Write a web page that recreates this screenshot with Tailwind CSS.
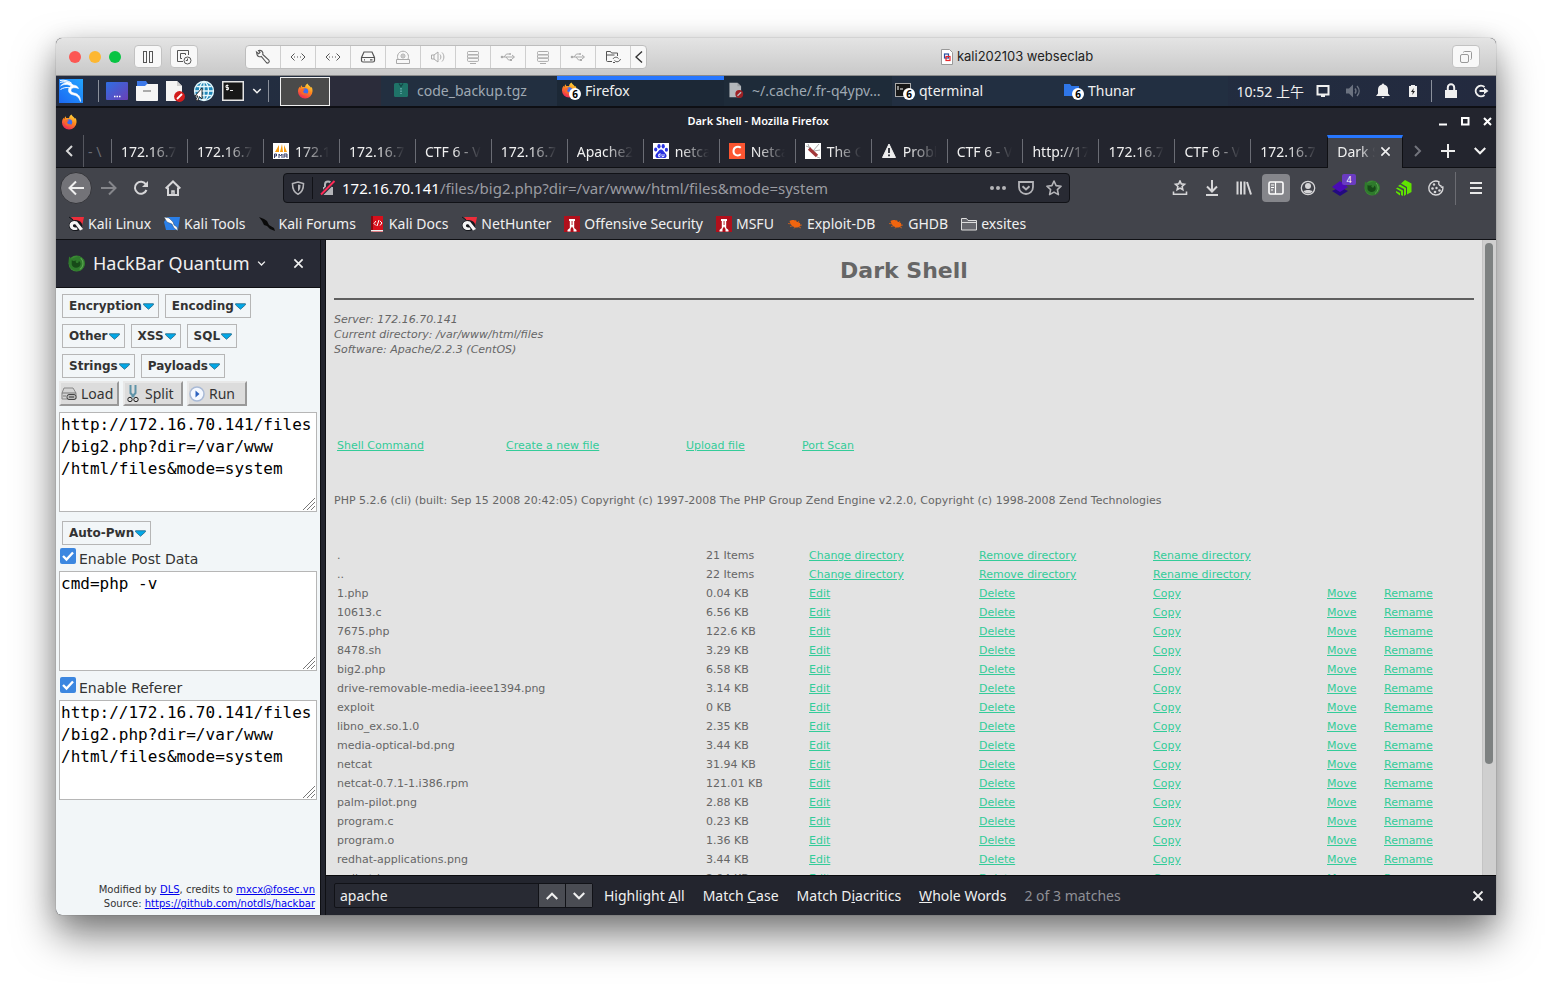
<!DOCTYPE html>
<html lang="en">
<head>
<meta charset="utf-8">
<title>Dark Shell - Mozilla Firefox</title>
<script src="https://cdn.jsdelivr.net/npm/@tailwindcss/browser@4"></script>
</head>
<body class="bg-white">
<svg class="absolute size-0" aria-hidden="true">
  <defs>
    <linearGradient id="ffg" x1="0.8" y1="0" x2="0.3" y2="1"><stop offset="0" stop-color="#ffe040"/><stop offset=".45" stop-color="#ff8a1c"/><stop offset="1" stop-color="#ee2558"/></linearGradient>
    <linearGradient id="deskg" x1="0" y1="0" x2="1" y2="1"><stop offset="0" stop-color="#2f6fe4"/><stop offset="1" stop-color="#6a3fb5"/></linearGradient>
    <linearGradient id="kalig" x1="1" y1="0" x2="0" y2="1"><stop offset="0" stop-color="#22a4ff"/><stop offset="1" stop-color="#1c68f2"/></linearGradient>
  </defs>
  <symbol id="firefox" viewBox="0 0 16 16"><path d="M8 15.500A7 7 0 0 1 1 8.400c0-2 .7-3.600 1.600-4.700l.6 1.400C3.700 3.800 4 2.800 4.700 2.300l.5 1.800c1.200-.3 2-.2 2.800.2.300-1.800 1-2.900 2.500-3.800.2 1.600 2.600 2.500 3.500 4.200l.7-.7c.5 1.200 1 2.700.8 4.600A7.200 7.200 0 0 1 8 15.500z" fill="url(#ffg)"/><circle cx="8.200" cy="8.200" r="3" fill="#3d6df0"/><path d="M4.500 6.200c1.500-.4 2.500 0 3.700.6-1.300.3-1.800 1-2 2 .5 1.500 2.300 1.900 4 1-1.500 3.200-6.200 2.200-6.500-1.300z" fill="#f9682a"/></symbol>
  <symbol id="kali" viewBox="0 0 24 24"><rect width="24" height="24" fill="url(#kalig)"/><path d="M1 3.500c5-2 10-1 13 2.500 3 .3 5 1.500 5.500 3.500-2-.8-4.500-1.200-6-.4-2.500 1.500-2 4.400 1.500 4.900 4.500.7 6.500 3.500 6.500 8.500-1.500-4-3.500-6.200-7.500-6.700-5.500-.8-6-7-1.500-8.800C9.500 5.500 5.500 4.500 1.500 7c2-2.300 4-3 6.500-3.200C6 2.800 3.500 2.800 1 3.500z" fill="#fff" stroke="#fff" stroke-width=".6"/><path d="M1.500 10.500c2.500-1.800 6-2.400 9-1.700M1 1.500c4-.7 8 0 11.500 2.500" stroke="#fff" fill="none"/></symbol>
  <symbol id="file-no" viewBox="0 0 20 22"><path d="M1 1h11l5 5v15H1z" fill="#f4f4f4"/><path d="M12 1l5 5h-5z" fill="#cfcfcf"/><circle cx="14.500" cy="16.500" r="5.400" fill="#d31c1c"/><path d="M12 19l5-5" stroke="#fff" stroke-width="1.800"/></symbol>
  <symbol id="nethunter" viewBox="0 0 16 16"><path d="M3 1h13l-1 5-2 7z" fill="#ee2d3a"/><path d="M1 1l4 3" stroke="#15171c"/><ellipse cx="7.500" cy="9.500" rx="6.700" ry="5.500" fill="#15171c"/><path d="M1.500 9C2 5.500 6 4 9 5.500L15 13l-3 1.500-4.500-6C6 8 4.800 8.700 5 10c.3 1.400 2 1.700 3.300 1.200l1.500 2C6 15.500 1.500 13 1.500 9z" fill="#f4f4f4"/></symbol>
  <symbol id="offsec" viewBox="0 0 16 16"><rect width="16" height="16" fill="#b0101c"/><path d="M5 3h6v2h-.8v7l2.300 2v1.500H9.500V13L8 10.500 6.500 13v2.500h-3V14l2.300-2V5H5z" fill="#fff"/><path d="M7.600 5h.9v4h-.9z" fill="#b0101c"/></symbol>
  <symbol id="bug" viewBox="0 0 16 16"><path d="M2.500 5c2.500-1.500 5.500-1 7.500.8l3 1.200.5 3-3 1.500C6.500 12 3.500 9 2.500 5z" fill="#f0650f"/><path d="M1 7.500l4 .5M3 10.500l4-1M7 12.500l1.500-2M9 4L8 6M12 5l-1.500 2M15 9l-4 .5M14 12l-4-2" stroke="#f0650f" stroke-width=".7"/></symbol>
  <symbol id="hackbar" viewBox="0 0 16 16"><circle cx="8" cy="8" r="7.500" fill="#3a8a34"/><path d="M.5 6L1 1.500l2.500 2L10 1l5 3c2 4 1 8-3 10.500C6 16 1 13 .5 6z" fill="#2f7a2c"/><path d="M3.500 5c1.500 1 3 .5 4.500 0-1 1-1 1.500 0 2.500 1.500.5 2.500-.5 2-2 2 1 2.500 4 .5 5.500-3 2-6.500.5-7-2z" fill="#174a18"/><path d="M12 3c3 3 3 8-1 10.500" stroke="#5ca552" fill="none"/></symbol>
  <symbol id="usb" viewBox="0 0 16 16"><path d="M1.500 8H14M12 6l2.500 2L12 10M4 8l2.500-3H9M6 8l2.500 3H10" fill="none" stroke="currentColor"/><circle cx="2" cy="8" r="1.300" fill="currentColor"/><circle cx="10" cy="5" r="1" fill="currentColor"/><path d="M10 10h2v2h-2z" fill="currentColor"/></symbol>
  <symbol id="server" viewBox="0 0 16 16"><rect x="2.500" y="2.500" width="11" height="3.300" rx="1"/><rect x="2.500" y="5.800" width="11" height="3.300" rx="1"/><rect x="2.500" y="9.100" width="11" height="3.300" rx="1"/><path d="M5 14.500h6"/></symbol>
  <symbol id="net" viewBox="0 0 16 16"><path d="M4.500 4.500L1 8l3.500 3.500M11.500 4.500L15 8l-3.500 3.500"/><path d="M4 8h9" stroke-dasharray="1 2"/></symbol>
  <symbol id="x" viewBox="0 0 12 12"><path d="M1.500 1.500l9 9M10.500 1.500l-9 9" stroke="currentColor" stroke-width="1.800" fill="none"/></symbol>
  <symbol id="down" viewBox="0 0 12 12"><path d="M1.500 3.500L6 8l4.500-4.500" stroke="currentColor" stroke-width="1.800" fill="none"/></symbol>
  <symbol id="tri" viewBox="0 0 10 6"><path d="M.5.500h9v1L5 5.500.5 1.500z" fill="#00a8e8" stroke="#2a6f8f" stroke-width=".8"/></symbol>
  <symbol id="grip" viewBox="0 0 12 12"><rect width="12" height="12" fill="#fff"/><path d="M0 12L12 0M4 12l8-8M8 12l4-4" stroke="#777" stroke-width="1" fill="none"/></symbol>
  <symbol id="check" viewBox="0 0 16 16"><path d="M3 8l3.500 3.500L13 4.500" stroke="#fff" stroke-width="2.400" fill="none"/></symbol>
</svg>

<div class="flex h-screen flex-col px-14 pt-[38px] pb-[74px]">
<div class="flex min-h-0 flex-1 flex-col overflow-hidden rounded-t-md rounded-bl-md bg-[#23252e] font-['Noto_Sans','Noto_Sans_CJK_SC',sans-serif] text-[14px] text-[#f0f0f0] shadow-[0_0_1px_rgba(0,0,0,0.6),0_20px_40px_rgba(0,0,0,0.5),0_4px_24px_rgba(0,0,0,0.12)]">

  <!-- Virtual machine window bar -->
  <header class="flex h-[38px] shrink-0 items-center border-b border-[#8b8b8b] bg-linear-to-b from-[#e4e4e4] to-[#c9c9c9] pr-4 pl-[13px] font-[Inter,sans-serif] text-[13px] text-[#222]">
    <div class="flex gap-2">
      <button aria-label="Close" class="size-3 rounded-full bg-[#fc5753]"></button>
      <button aria-label="Minimize" class="size-3 rounded-full bg-[#fdb731]"></button>
      <button aria-label="Zoom" class="size-3 rounded-full bg-[#08c443]"></button>
    </div>
    <div class="ml-[13px] flex gap-2">
      <button aria-label="Pause" class="flex h-[23px] w-7 items-center justify-center rounded-sm border border-[#c2c2c2] bg-[#f8f8f8]"><svg class="size-4" viewBox="0 0 16 16" fill="none" stroke="#555"><rect x="3.500" y="2.500" width="3" height="11"/><rect x="9.500" y="2.500" width="3" height="11"/></svg></button>
      <button aria-label="Snapshots" class="flex h-[23px] w-7 items-center justify-center rounded-sm border border-[#c2c2c2] bg-[#f8f8f8]"><svg class="size-4" viewBox="0 0 16 16" fill="none" stroke="#555"><path d="M7 12.500H1.500v-11h11V6M4.500 9.500v-5h5V6M4.500 9.500H6"/><circle cx="11.500" cy="11.500" r="3.500"/><path d="M11.500 9.500v2H9.800"/></svg></button>
    </div>
    <div class="ml-[47px] flex h-[24px] divide-x divide-[#cfcfcf] rounded-sm border border-[#bdbdbd] bg-[#f8f8f8] text-[#555]">
      <button aria-label="Settings" class="flex w-[35px] items-center justify-center"><svg class="size-4" viewBox="0 0 16 16" fill="none" stroke="currentColor" stroke-width="1.100"><path d="M2 5.500L1.500 3l2.200 1.700L5 3.500 3.500 1.500c3-.8 5 1.500 4.300 4l6 5.500c1.500 2-1 4-2.500 2.500l-5-6C4.500 8.200 2.500 7.500 2 5.500z"/></svg></button>
      <button aria-label="Network adapter" class="flex w-[35px] items-center justify-center"><svg class="size-4" fill="none" stroke="currentColor"><use href="#net"/></svg></button>
      <button aria-label="Network adapter 2" class="flex w-[35px] items-center justify-center"><svg class="size-4" fill="none" stroke="currentColor"><use href="#net"/></svg></button>
      <button aria-label="Hard disk" class="flex w-[35px] items-center justify-center"><svg class="size-4" viewBox="0 0 16 16" fill="none" stroke="currentColor" stroke-width="1.200"><path d="M1.500 8.500L4 3h8l2.500 5.500v3c0 1-.5 1.500-1.500 1.500H3c-1 0-1.500-.5-1.500-1.500zM1.500 8.500h13"/><path d="M10 10.800h2.500M4 10.800h1"/></svg></button>
      <button aria-label="CD/DVD" class="flex w-[35px] items-center justify-center text-[#aaa]"><svg class="size-4" viewBox="0 0 16 16" fill="none" stroke="currentColor"><path d="M3 10a5.500 5.500 0 1 1 10 0M1.500 10.500h13v4h-13z"/><circle cx="8" cy="7" r="2"/><circle cx="8" cy="7" r=".5"/></svg></button>
      <button aria-label="Sound card" class="flex w-[35px] items-center justify-center text-[#aaa]"><svg class="size-4" viewBox="0 0 16 16" fill="none" stroke="currentColor"><path d="M1.500 6h2.500v4H1.500zM4 6l4-3v10l-4-3M10 5.500c1.200 1.500 1.200 3.500 0 5M12 3.500c2.500 2.500 2.500 6.500 0 9"/></svg></button>
      <button aria-label="Serial port" class="flex w-[35px] items-center justify-center text-[#aaa]"><svg class="size-4" fill="none" stroke="currentColor"><use href="#server"/></svg></button>
      <button aria-label="USB device" class="flex w-[35px] items-center justify-center text-[#aaa]"><svg class="size-4"><use href="#usb"/></svg></button>
      <button aria-label="Serial port 2" class="flex w-[35px] items-center justify-center text-[#aaa]"><svg class="size-4" fill="none" stroke="currentColor"><use href="#server"/></svg></button>
      <button aria-label="USB device 2" class="flex w-[35px] items-center justify-center text-[#aaa]"><svg class="size-4"><use href="#usb"/></svg></button>
      <button aria-label="Shared folders" class="flex w-[35px] items-center justify-center"><svg class="size-4" viewBox="0 0 16 16" fill="none" stroke="currentColor"><path d="M7 12.500H2.500c-.6 0-1-.4-1-1v-9h4l1 1.500h6V7M1.500 6h8"/><path d="M8 10c1-2 4-2.500 5.500-.5M15.500 10c-1 3-4 3.500-6 1.500M8 13.500h2"/></svg></button>
      <button aria-label="Collapse toolbar" class="flex w-[15px] items-center justify-center"><svg class="h-3 w-2" viewBox="0 0 8 12" fill="none" stroke="#333" stroke-width="1.400"><path d="M7 .5L1 6l6 5.500"/></svg></button>
    </div>
    <div class="flex flex-1 items-center justify-center gap-1 pr-[65px]">
      <svg class="h-4 w-3" viewBox="0 0 12 16"><path d="M.5.500h8l3 3v12H.5z" fill="#fff" stroke="#999"/><rect x="3.500" y="5" width="4" height="4" fill="none" stroke="#2a4fa0" stroke-width="1.200"/><rect x="5" y="7.500" width="4" height="4" fill="none" stroke="#e8262a" stroke-width="1.200"/></svg>
      <span>kali202103 webseclab</span>
    </div>
    <button aria-label="Windows" class="flex h-[23px] w-7 items-center justify-center rounded-sm border border-[#c2c2c2] bg-[#f8f8f8]"><svg class="size-4" viewBox="0 0 16 16" fill="none" stroke="#999"><rect x="2.500" y="5.500" width="8" height="8" rx="1.500"/><path d="M5.500 3.500c0-.6.400-1 1-1h6c.6 0 1 .4 1 1v6c0 .6-.4 1-1 1"/></svg></button>
  </header>

  <!-- Desktop panel -->
  <nav class="flex h-8 shrink-0 items-center border-b-2 border-[#0e0f14] bg-linear-to-r from-[#242c40] via-[#203040] to-[#232a3f]">
    <button aria-label="Applications" class="ml-[3px]"><svg class="size-6"><use href="#kali"/></svg></button>
    <span class="ml-[15px] h-[22px] w-px bg-[#8a909c]"></span>
    <div class="ml-[7px] flex w-[156px] items-center justify-between">
      <button aria-label="Show desktop"><svg class="h-[18px] w-[22px]" viewBox="0 0 22 18"><rect width="22" height="18" rx="1" fill="url(#deskg)"/><path d="M8 14.500h1.500M10.500 14.500H12M13 14.500h1.500" stroke="#fff" stroke-width="1.500"/></svg></button>
      <button aria-label="Files"><svg class="h-5 w-[22px]" viewBox="0 0 22 20"><path d="M1 0h9l2 3h9v8H1z" fill="#3c78e8"/><path d="M0 5h9l2-2h11v16c0 .6-.4 1-1 1H1c-.6 0-1-.4-1-1z" fill="#f5f5f5"/><path d="M7 10h8" stroke="#aaa" stroke-width="2"/></svg></button>
      <button aria-label="Text editor"><svg class="h-[22px] w-5"><use href="#file-no"/></svg></button>
      <button aria-label="Web browser"><svg class="size-[22px]" viewBox="0 0 22 22"><circle cx="11" cy="11" r="10" fill="#1f86b8"/><g fill="none" stroke="#e8f8fc" stroke-width="1.300"><circle cx="11" cy="11" r="9.500"/><ellipse cx="11" cy="11" rx="4.500" ry="9"/><path d="M11 1v20M2 11h18M3.500 6.500h15M3.500 15.500h15"/></g><path d="M9 8v11l-2.500-2.500L4.500 21l-1.700-1L5 16H2z" fill="#fff" stroke="#222" stroke-width=".9"/></svg></button>
      <button aria-label="Terminal"><svg class="h-5 w-[22px]" viewBox="0 0 22 20"><rect x=".75" y=".75" width="20.500" height="18.500" fill="#181818" stroke="#e4e4e4" stroke-width="1.500"/><path d="M6.500 4.500H4v2h2.500v2H4M5.200 3.500v6M8 9.500h3" stroke="#fff" stroke-width=".9" fill="none"/></svg></button>
      <button aria-label="More terminals"><svg class="size-[10px]"><use href="#down"/></svg></button>
    </div>
    <span class="ml-[6px] h-[22px] w-px bg-[#8a909c]"></span>
    <button aria-label="Workspace 1" class="ml-[11px] flex h-[29px] w-[50px] items-center justify-center border border-[#eee] bg-[#4a4a4a]"><svg class="size-4"><use href="#firefox"/></svg></button>
    <button aria-label="Workspace 2" class="h-full w-[51px] bg-[#2b2c3a]"></button>
    <button class="flex h-full w-[176px] items-center gap-2 bg-[#222f40] pb-[2px] pl-3 text-[#9fa9b3]"><svg class="size-4" viewBox="0 0 16 16"><rect x="1" y="1" width="14" height="14" rx="1.500" fill="#1f7368"/><path d="M6 1.500l2 3 2-3" stroke="#144" stroke-width="1.200" fill="none"/><path d="M8 6v6" stroke="#6aa" stroke-width="1.500" stroke-dasharray="1.500 1"/></svg><span>code_backup.tgz</span></button>
    <button class="flex h-full w-[167px] items-center gap-2 border-t-4 border-[#2777ff] bg-[#1c2836] pb-[6px] pl-1"><span class="relative size-4"><svg class="size-4"><use href="#firefox"/></svg><span class="absolute top-1.5 left-2 flex size-3 items-center justify-center rounded-full bg-white text-[10px] font-bold text-black">6</span></span><span>Firefox</span></button>
    <button class="flex h-full w-[168px] items-center gap-2 bg-[#1e2b39] pb-[2px] pl-1 text-[#9fa9b3]"><svg class="size-4 opacity-70"><use href="#file-no"/></svg><span>~/.cache/.fr-q4ypv…</span></button>
    <button class="flex h-full w-[168px] items-center gap-2 bg-[#222f41] pb-[2px] pl-[3px]"><span class="relative size-4"><svg class="size-4" viewBox="0 0 16 16"><rect x=".5" y="1.500" width="15" height="13" fill="#181818" stroke="#aaa"/><path d="M3 4v4M5 7h3" stroke="#fff"/></svg><span class="absolute top-1.5 left-2 flex size-3 items-center justify-center rounded-full bg-white text-[10px] font-bold text-black">6</span></span><span>qterminal</span></button>
    <button class="flex h-full w-[168px] items-center gap-2 bg-[#222f41] pb-[2px] pl-1"><span class="relative size-4"><svg class="size-4" viewBox="0 0 16 16"><path d="M0 2h6l1.500 2H15v10H0z" fill="#2f76e8"/></svg><span class="absolute top-1.5 left-2 flex size-3 items-center justify-center rounded-full bg-white text-[10px] font-bold text-black">6</span></span><span>Thunar</span></button>
    <div class="ml-auto flex items-center">
      <time class="pr-1">10:52 上午</time>
      <button aria-label="Display" class="flex w-[30px] justify-center"><svg class="size-4" viewBox="0 0 16 16" fill="none" stroke="currentColor" stroke-width="2"><path d="M2.500 3h11v8.500h-11z"/><path d="M6 13h4"/></svg></button>
      <button aria-label="Volume" class="flex w-[30px] justify-center text-[#6b7280]"><svg class="size-4" viewBox="0 0 16 16"><path d="M1 5.500h3l4-4v13l-4-4H1z" fill="currentColor"/><path d="M10 5.500c1.200 1.500 1.200 3.500 0 5M12 3c2.800 3 2.800 7 0 10" stroke="currentColor" stroke-width="1.400" fill="none"/></svg></button>
      <button aria-label="Notifications" class="flex w-[30px] justify-center"><svg class="size-4" viewBox="0 0 16 16" fill="currentColor"><path d="M7 1.500a1 1 0 0 1 2 0c2.500.5 4 2.500 4 5v4l2 2.500H1l2-2.500v-4c0-2.500 1.500-4.500 4-5zM6.500 14h3L8 15.500z"/></svg></button>
      <button aria-label="Power" class="flex w-[30px] justify-center"><svg class="size-4" viewBox="0 0 16 16"><path d="M6 3V2h4v1h2v11H4V3z" fill="#f0f0f0"/><path d="M8.700 5L6 9h1.800L7.300 12 10 8H8.200z" fill="#222"/></svg></button>
      <span class="mx-[3px] h-[22px] w-px bg-[#8a909c]"></span>
      <button aria-label="Lock" class="flex w-[31px] justify-center"><svg class="size-4" viewBox="0 0 16 16"><path d="M2 7h12v8H2z" fill="currentColor"/><path d="M4.800 7V4.500a3.200 3.200 0 0 1 6.400 0V7" stroke="currentColor" stroke-width="2" fill="none"/></svg></button>
      <button aria-label="Log out" class="flex w-[30px] justify-center"><svg class="size-4" viewBox="0 0 16 16" fill="none" stroke="currentColor" stroke-width="2"><path d="M11.500 4A5.300 5.300 0 1 0 11.500 12"/><path d="M6.500 8h6"/><path d="M11 4.800l4.500 3.200-4.500 3.200z" fill="currentColor" stroke="none"/></svg></button>
    </div>
  </nav>

  <!-- Browser title -->
  <div class="flex h-[27px] shrink-0 items-center pl-[5px]">
    <svg class="size-4"><use href="#firefox"/></svg>
    <h2 class="flex-1 text-center text-[11px] font-semibold text-white">Dark Shell - Mozilla Firefox</h2>
    <div class="flex items-center gap-[13px] pr-1">
      <button aria-label="Minimize window"><svg class="size-[9px]" viewBox="0 0 9 9"><path d="M0 7.500h8" stroke="#fff" stroke-width="2"/></svg></button>
      <button aria-label="Maximize window"><svg class="size-[9px]" viewBox="0 0 9 9"><rect x="1" y="1" width="6.500" height="6.500" fill="none" stroke="#fff" stroke-width="2"/></svg></button>
      <button aria-label="Close window"><svg class="size-[9px]" viewBox="0 0 9 9"><path d="M1 1l7 7M8 1L1 8" stroke="#fff" stroke-width="2"/></svg></button>
    </div>
  </div>

  <!-- Tabs -->
  <div class="flex h-[33px] shrink-0 border-b border-[#0f1014]">
    <button aria-label="Scroll tabs left" class="flex w-7 items-center justify-center border-r border-[#55575f]"><svg class="h-3 w-2" viewBox="0 0 8 12" fill="none" stroke="#d8d8d8" stroke-width="2"><path d="M7 1L2 6l5 5"/></svg></button>
    <div id="tabs" role="tablist" class="flex min-w-0"></div>
    <button aria-label="Scroll tabs right" class="flex w-[30px] items-center justify-center"><svg class="h-3 w-2" viewBox="0 0 8 12" fill="none" stroke="#72747c" stroke-width="2"><path d="M1 1l5 5-5 5"/></svg></button>
    <button aria-label="New tab" class="flex w-[30px] items-center justify-center"><svg class="size-[14px]" viewBox="0 0 14 14" stroke="#eee" stroke-width="2"><path d="M7 0v14M0 7h14"/></svg></button>
    <button aria-label="List all tabs" class="flex w-[33px] items-center justify-center"><svg class="size-[14px]"><use href="#down" width="14" height="14"/></svg></button>
  </div>

  <!-- Navigation toolbar -->
  <div class="flex h-10 shrink-0 items-center bg-[#42444b] pl-1 text-[#d6d6d8]">
    <button aria-label="Back" class="mr-px flex size-8 items-center justify-center rounded-full border border-[#34353a] bg-[#737378]"><svg class="size-4" viewBox="0 0 16 16" fill="none" stroke="#eee" stroke-width="2"><path d="M16 8H1.500M8 1.500L1.500 8 8 14.500"/></svg></button>
    <button aria-label="Forward" class="flex size-8 items-center justify-center text-[#85868b]"><svg class="size-4" viewBox="0 0 16 16" fill="none" stroke="currentColor" stroke-width="2"><path d="M0 8h14.500M8 1.500L14.500 8 8 14.500"/></svg></button>
    <button aria-label="Reload" class="flex size-8 items-center justify-center"><svg class="size-4" viewBox="0 0 16 16" fill="none" stroke="currentColor" stroke-width="2"><path d="M13 4.500A6 6 0 1 0 13.500 10"/><path d="M15 1v6H9z" fill="currentColor" stroke="none"/></svg></button>
    <button aria-label="Home" class="flex size-8 items-center justify-center"><svg class="size-4" viewBox="0 0 16 16" fill="none" stroke="currentColor" stroke-width="2"><path d="M.7 8.500L8 1.500l7.300 7M3 7.500V15h10V7.500"/><path d="M7 15v-4h2v4" stroke-width="1.500"/></svg></button>
    <div class="mx-[94px] flex h-[30px] min-w-0 flex-1 items-center rounded-sm border border-[#111217] bg-[#282a33] pr-[7px] text-[#b4b4b8]">
      <button aria-label="Tracking protection" class="flex w-7 justify-center"><svg class="size-[14px]" viewBox="0 0 14 14"><path d="M7 1l5.500 1.500C12.500 8 11 11.500 7 13.200 3 11.500 1.500 8 1.500 2.500z" fill="none" stroke="currentColor" stroke-width="1.600"/><path d="M7 3.500l2.500.6C9.500 7.500 9 9 7 10.500z" fill="currentColor"/></svg></button>
      <span class="h-[22px] w-px bg-[#111217]"></span>
      <button aria-label="Connection not secure" class="flex w-[29px] justify-center"><svg class="size-4" viewBox="0 0 16 16"><path d="M3 7h10v8H3z" fill="currentColor"/><path d="M5 7V4.500a3 3 0 0 1 6 0V7" stroke="currentColor" stroke-width="2" fill="none"/><path d="M1 14.500L14.500 1" stroke="#282a33" stroke-width="4"/><path d="M1 14.500L14.500 1" stroke="#ff2a56" stroke-width="2"/></svg></button>
      <div contenteditable="true" role="textbox" aria-label="Address" class="min-w-0 flex-1 truncate text-[15px] text-[#9a9ba1]"><span class="text-white">172.16.70.141</span>/files/big2.php?dir=/var/www/html/files&amp;mode=system</div>
      <div class="flex gap-3">
        <button aria-label="Page actions"><svg class="size-4" viewBox="0 0 16 16" fill="currentColor"><circle cx="2" cy="8" r="2"/><circle cx="8" cy="8" r="2"/><circle cx="14" cy="8" r="2"/></svg></button>
        <button aria-label="Save to Pocket"><svg class="size-4" viewBox="0 0 16 16" fill="none" stroke="currentColor" stroke-width="1.800"><path d="M1 2h14v5c0 4.500-3.500 7-7 7s-7-2.500-7-7z"/><path d="M4.500 6.300L8 9.500l3.500-3.200" stroke-width="2"/></svg></button>
        <button aria-label="Bookmark this page"><svg class="size-4" viewBox="0 0 16 16" fill="none" stroke="currentColor" stroke-width="1.600" stroke-linejoin="round"><path d="M8 1l2.100 4.600 5 .6-3.700 3.400 1 5L8 12.100l-4.400 2.500 1-5L.9 6.200l5-.6z"/></svg></button>
      </div>
    </div>
    <div class="flex items-center">
      <button aria-label="Bookmarks menu" class="flex w-8 justify-center"><svg class="size-4" viewBox="0 0 16 16" fill="none" stroke="currentColor" stroke-width="1.600"><path d="M8 1l1.300 2.900 3.200.4-2.400 2.200.7 3.200L8 8.100 5.200 9.700l.7-3.200L3.500 4.300l3.200-.4zM1.500 11.500v2.700h13v-2.700"/></svg></button>
      <button aria-label="Downloads" class="flex w-8 justify-center"><svg class="size-4" viewBox="0 0 16 16" fill="none" stroke="currentColor" stroke-width="2"><path d="M8 0v11M3 6.500l5 5 5-5M2 15h12"/></svg></button>
      <button aria-label="Library" class="flex w-8 justify-center"><svg class="size-4" viewBox="0 0 16 16" fill="none" stroke="currentColor" stroke-width="2"><path d="M1.500 1.500v13M5 1.500v13M8.500 1.500v13M11 2l4 12.500"/></svg></button>
      <button aria-label="Sidebars" class="mx-[2px] flex size-7 items-center justify-center rounded-sm bg-[#85868b] text-white"><svg class="size-4" viewBox="0 0 16 16" fill="none" stroke="currentColor" stroke-width="1.600"><rect x="1" y="2" width="14" height="12" rx="1.500"/><path d="M7.500 2v12M3 5h3M3 7.500h3M3 10h2" stroke-width="1.200"/></svg></button>
      <button aria-label="Account" class="flex w-8 justify-center"><svg class="size-4" viewBox="0 0 16 16"><circle cx="8" cy="8" r="6.700" fill="none" stroke="currentColor" stroke-width="1.300"/><circle cx="8" cy="6" r="3" fill="currentColor"/><path d="M3.500 11.500c1-2 8-2 9 0C10.500 14 5.500 14 3.500 11.500z" fill="currentColor"/></svg></button>
      <button aria-label="Extension, 4 items" class="relative flex w-8 justify-center"><svg class="size-4" viewBox="0 0 16 16"><path d="M0 11l8-4 8 4-8 5z" fill="#230a80"/><path d="M0 7l8-6 8 6-8 5z" fill="#4a0bb5"/></svg><span class="absolute -top-1.5 right-0 flex h-[11px] w-[14px] items-center justify-center rounded-xs bg-[#6a3cc0] text-[9px] text-white">4</span></button>
      <button aria-label="HackBar" class="flex w-8 justify-center"><svg class="size-4"><use href="#hackbar"/></svg></button>
      <button aria-label="Wappalyzer" class="flex w-8 justify-center"><svg class="size-4" viewBox="0 0 16 16" fill="#5fe300"><path d="M9 0l6.500 3.500v8.500L11 14.500V7L5 3.500z"/><path d="M4 4.500L10 8v6.500l-2 1.500V9L2 6z"/><path d="M0 8.500l1.500-1L7 10.500V16l-2-1v-3.500z"/><path d="M0 11l4 2v2.500l-1.500-1-2.500-2z"/></svg></button>
      <button aria-label="Cookies" class="flex w-8 justify-center"><svg class="size-4" viewBox="0 0 16 16" fill="none" stroke="currentColor" stroke-width="1.400"><path d="M11 1.800A7 7 0 1 0 14.800 7c-1 .5-2 0-2-1.200-1.800 0-2.500-2-1.800-4z"/><g fill="currentColor" stroke="none"><circle cx="6" cy="4.500" r="1.200"/><circle cx="4.500" cy="8.500" r="1.300"/><circle cx="8.500" cy="8" r="1.200"/><circle cx="7" cy="12" r="1.300"/><circle cx="11.500" cy="10.500" r="1.300"/></g></svg></button>
      <span class="ml-[3px] h-[33px] w-px bg-[#6b6c72]"></span>
      <button aria-label="Open menu" class="flex w-10 justify-center"><svg class="size-3" viewBox="0 0 12 12" stroke="#e8e8e8" stroke-width="2"><path d="M0 1h12M0 6h12M0 11h12"/></svg></button>
    </div>
  </div>

  <!-- Bookmarks toolbar -->
  <div class="flex h-8 shrink-0 items-center gap-[13px] border-b border-[#0f1014] bg-[#42444b] pl-3 whitespace-nowrap">
    <a href="#" class="flex items-center gap-1"><svg class="size-4"><use href="#nethunter"/></svg>Kali Linux</a>
    <a href="#" class="flex items-center gap-1"><svg class="size-4" viewBox="0 0 16 16"><path d="M3 1h13l-2 13H2L0 6z" fill="#2a7fe8"/><path d="M0 1l5 1 4 4 1 3 3 2 1 4-4-3-2-4-5-2z" fill="#fff" stroke="#234" stroke-width=".4"/></svg>Kali Tools</a>
    <a href="#" class="flex items-center gap-1"><svg class="size-4" viewBox="0 0 16 16"><path d="M0 1l5 2 3 2 2 4 5 3 1 3-5-2-3-3-3-1-2-4z" fill="#0a0a0a"/></svg>Kali Forums</a>
    <a href="#" class="flex items-center gap-1"><svg class="size-4" viewBox="0 0 16 16"><path d="M2 0h12v16H2z" fill="#d8101c"/><path d="M2 0h2v16H2z" fill="#8a0810"/><path d="M2 14h12v1.500H2z" fill="#eee"/><path d="M7 5L5 7.500l2 2M11 5l2 2-2 2.500M10 4L8 10" stroke="#fff" fill="none"/></svg>Kali Docs</a>
    <a href="#" class="flex items-center gap-1"><svg class="size-4"><use href="#nethunter"/></svg>NetHunter</a>
    <a href="#" class="flex items-center gap-1"><svg class="size-4"><use href="#offsec"/></svg>Offensive Security</a>
    <a href="#" class="flex items-center gap-1"><svg class="size-4"><use href="#offsec"/></svg>MSFU</a>
    <a href="#" class="flex items-center gap-1"><svg class="size-4"><use href="#bug"/></svg>Exploit-DB</a>
    <a href="#" class="flex items-center gap-1"><svg class="size-4"><use href="#bug"/></svg>GHDB</a>
    <a href="#" class="flex items-center gap-1"><svg class="size-4" viewBox="0 0 16 16" fill="#66676d" stroke="#ddd"><path d="M.5 14V2.500h5L7 4.500h8.500V14zM.5 6.500h15"/></svg>exsites</a>
  </div>

  <div class="flex min-h-0 flex-1">
    <!-- HackBar sidebar -->
    <aside class="flex w-[264px] shrink-0 flex-col bg-[#f2f6f8] font-['DejaVu_Sans',sans-serif] text-[#333]">
      <div class="flex h-12 shrink-0 items-center border-b border-[#0f1014] bg-[#282a35] pr-4 pl-3 font-['Noto_Sans',sans-serif] text-[18px] text-[#f0f0f0]">
        <svg class="size-[17px]"><use href="#hackbar"/></svg>
        <button class="ml-2 flex items-center gap-2">HackBar Quantum<svg class="size-[9px]"><use href="#down"/></svg></button>
        <button aria-label="Close sidebar" class="ml-auto"><svg class="size-[11px]"><use href="#x"/></svg></button>
      </div>
      <div class="flex min-h-0 flex-1 flex-col px-[3px]">
        <div class="flex flex-col gap-[6px] pt-[6px] pl-[3px] text-[12px] font-bold">
          <div class="flex gap-[6px]">
            <button class="flex h-6 items-center gap-px border border-[#b6b6b6] pr-1 pl-[6px]">Encryption<svg class="h-[7px] w-[11px]"><use href="#tri"/></svg></button>
            <button class="flex h-6 items-center gap-px border border-[#b6b6b6] pr-1 pl-[6px]">Encoding<svg class="h-[7px] w-[11px]"><use href="#tri"/></svg></button>
          </div>
          <div class="flex gap-[6px]">
            <button class="flex h-6 items-center gap-px border border-[#b6b6b6] pr-1 pl-[6px]">Other<svg class="h-[7px] w-[11px]"><use href="#tri"/></svg></button>
            <button class="flex h-6 items-center gap-px border border-[#b6b6b6] pr-1 pl-[6px]">XSS<svg class="h-[7px] w-[11px]"><use href="#tri"/></svg></button>
            <button class="flex h-6 items-center gap-px border border-[#b6b6b6] pr-1 pl-[6px]">SQL<svg class="h-[7px] w-[11px]"><use href="#tri"/></svg></button>
          </div>
          <div class="flex gap-[6px]">
            <button class="flex h-6 items-center gap-px border border-[#b6b6b6] pr-1 pl-[6px]">Strings<svg class="h-[7px] w-[11px]"><use href="#tri"/></svg></button>
            <button class="flex h-6 items-center gap-px border border-[#b6b6b6] pr-1 pl-[6px]">Payloads<svg class="h-[7px] w-[11px]"><use href="#tri"/></svg></button>
          </div>
        </div>
        <div class="mt-[3px] flex gap-1 font-['Noto_Sans',sans-serif] text-[14px]">
          <button class="flex h-[25px] w-[60px] items-center gap-1 border-2 border-t-[#e8e8e8] border-r-[#999] border-b-[#999] border-l-[#e8e8e8] bg-[#dcdcdc]"><svg class="size-4" viewBox="0 0 16 16"><path d="M3 2h9l3 5v6H1V7z" fill="#d4d4d4" stroke="#888"/><path d="M1 7h14M2 10h3" stroke="#777"/><rect x="6" y="8.500" width="9" height="5" rx="2" fill="#bbb" stroke="#444"/><path d="M8 11h5" stroke="#333"/></svg>Load</button>
          <button class="flex h-[25px] w-[60px] items-center gap-1 border-2 border-t-[#e8e8e8] border-r-[#999] border-b-[#999] border-l-[#e8e8e8] bg-[#dcdcdc]"><svg class="h-[18px] w-4" viewBox="0 0 16 18" fill="none"><path d="M5.500 0v8l3.500 4M10.500 0v8L7 12" stroke="#5f93a8" stroke-width="2"/><circle cx="5" cy="14.500" r="2.200" stroke="#222"/><circle cx="11" cy="14.500" r="2.200" stroke="#222"/></svg>Split</button>
          <button class="flex h-[25px] w-[60px] items-center gap-1 border-2 border-t-[#e8e8e8] border-r-[#999] border-b-[#999] border-l-[#e8e8e8] bg-[#dcdcdc]"><svg class="size-4" viewBox="0 0 16 16"><circle cx="8" cy="8" r="7" fill="#f4f8ff" stroke="#a9bad6" stroke-width="1.500"/><path d="M6.500 4.500L10.500 8l-4 3.500z" fill="#2c62c0"/></svg>Run</button>
        </div>
        <div class="relative mt-[6px] h-[100px] shrink-0">
          <textarea aria-label="URL" class="block size-full resize-none overflow-hidden border border-[#b6b6b6] bg-white p-px font-['DejaVu_Sans_Mono',monospace] text-[16px] leading-[22px] whitespace-pre text-black">http://172.16.70.141/files
/big2.php?dir=/var/www
/html/files&amp;mode=system</textarea>
          <svg class="absolute right-[2px] bottom-[2px] size-3"><use href="#grip"/></svg>
        </div>
        <div class="mt-[9px] flex pl-[3px] text-[12px] font-bold">
          <button class="flex h-6 items-center gap-px border border-[#b6b6b6] pr-1 pl-[6px]">Auto-Pwn<svg class="h-[7px] w-[11px]"><use href="#tri"/></svg></button>
        </div>
        <div class="mt-[3px] flex h-[23px] text-[14px]">
          <span class="relative ml-px size-4"><input id="post" type="checkbox" checked class="block size-4 appearance-none rounded-xs bg-[#3c87e0]"><svg class="pointer-events-none absolute inset-0 size-4"><use href="#check"/></svg></span>
          <label for="post" class="pt-px pl-[3px]">Enable Post Data</label>
        </div>
        <div class="relative h-[100px] shrink-0">
          <textarea aria-label="Post data" class="block size-full resize-none overflow-hidden border border-[#b6b6b6] bg-white p-px font-['DejaVu_Sans_Mono',monospace] text-[16px] leading-[22px] whitespace-pre text-black">cmd=php -v</textarea>
          <svg class="absolute right-[2px] bottom-[2px] size-3"><use href="#grip"/></svg>
        </div>
        <div class="mt-[6px] flex h-[23px] text-[14px]">
          <span class="relative ml-px size-4"><input id="ref" type="checkbox" checked class="block size-4 appearance-none rounded-xs bg-[#3c87e0]"><svg class="pointer-events-none absolute inset-0 size-4"><use href="#check"/></svg></span>
          <label for="ref" class="pt-px pl-[3px]">Enable Referer</label>
        </div>
        <div class="relative h-[100px] shrink-0">
          <textarea aria-label="Referer" class="block size-full resize-none overflow-hidden border border-[#b6b6b6] bg-white p-px font-['DejaVu_Sans_Mono',monospace] text-[16px] leading-[22px] whitespace-pre text-black">http://172.16.70.141/files
/big2.php?dir=/var/www
/html/files&amp;mode=system</textarea>
          <svg class="absolute right-[2px] bottom-[2px] size-3"><use href="#grip"/></svg>
        </div>
        <p class="mt-auto pr-[2px] pb-1 text-right text-[10px] leading-[14px]">Modified by <a href="#" class="text-[#0000ee] underline">DLS</a>, credits to <a href="#" class="text-[#0000ee] underline">mxcx@fosec.vn</a><br>Source: <a href="#" class="text-[#0000ee] underline">https://github.com/notdls/hackbar</a></p>
      </div>
    </aside>
    <div class="w-[6px] shrink-0 border-x border-[#0f1014] bg-[#23252e]"></div>

    <div class="flex min-w-0 flex-1 flex-col">
      <div class="flex min-h-0 flex-1">
        <main class="min-w-0 flex-1 overflow-hidden bg-[#e3e3e3] px-2 font-['DejaVu_Sans',sans-serif] text-[11px] leading-[15px] text-[#666]">
          <h1 class="pt-[17px] text-center text-[22px] leading-7 font-bold">Dark Shell</h1>
          <hr class="mt-[13px] border-t-2 border-[#5f5f5f]">
          <p class="mt-3 italic">Server: 172.16.70.141<br>Current directory: /var/www/html/files<br>Software: Apache/2.2.3 (CentOS)</p>
          <nav class="mt-[81px] flex pl-[3px] text-[#33cc99]">
            <span class="w-[169px]"><a href="#" class="underline">Shell Command</a></span>
            <span class="w-[180px]"><a href="#" class="underline">Create a new file</a></span>
            <span class="w-[116px]"><a href="#" class="underline">Upload file</a></span>
            <a href="#" class="underline">Port Scan</a>
          </nav>
          <p class="mt-10">PHP 5.2.6 (cli) (built: Sep 15 2008 20:42:05) Copyright (c) 1997-2008 The PHP Group Zend Engine v2.2.0, Copyright (c) 1998-2008 Zend Technologies</p>
          <table class="mt-[38px] w-full table-fixed">
            <colgroup><col class="w-[369px]"><col class="w-[103px]"><col class="w-[170px]"><col class="w-[174px]"><col class="w-[174px]"><col class="w-[57px]"><col></colgroup>
            <tbody id="files"></tbody>
          </table>
        </main>
        <div class="flex w-[14px] shrink-0 justify-center border-l border-[#c4c4c4] bg-[#cfcfcf] pt-[3px] pr-px"><div class="h-[521px] w-2 rounded-full bg-[#7d8181]"></div></div>
      </div>
      <!-- Find bar -->
      <div class="flex h-10 shrink-0 items-center border-t border-[#0a0a0d] bg-[#23252e] pr-3 pl-2 whitespace-nowrap">
        <div class="flex h-[25px] w-[259px] shrink-0 divide-x divide-[#111217] rounded-xs border border-[#111217] bg-[#282a33]">
          <input aria-label="Find in page" value="apache" class="min-w-0 flex-1 px-[5px]">
          <button aria-label="Previous match" class="flex w-[27px] items-center justify-center bg-[#4a4c53]"><svg class="size-[14px] rotate-180"><use href="#down" width="14" height="14"/></svg></button>
          <button aria-label="Next match" class="flex w-[26px] items-center justify-center bg-[#4a4c53]"><svg class="size-[14px]"><use href="#down" width="14" height="14"/></svg></button>
        </div>
        <div class="ml-[11px] flex gap-[18px]">
          <button>Highlight <u>A</u>ll</button><button>Match <u>C</u>ase</button><button>Match D<u>i</u>acritics</button><button><u>W</u>hole Words</button><span class="text-[#8f9096]">2 of 3 matches</span>
        </div>
        <button aria-label="Close find bar" class="ml-auto"><svg class="size-3"><use href="#x"/></svg></button>
      </div>
    </div>
  </div>
</div>
</div>

<script>
const icons = {
  pma: '<svg class="size-4 shrink-0" viewBox="0 0 16 16"><rect width="16" height="16" fill="#fff"/><path d="M2 9L6 2v7zM7 9l2-8 1 8zM11 9V2l3 7z" fill="#f89c0e"/><path d="M1.500 15v-4h2v2h-2M6 15v-4l1.500 2L9 11v4M11 15v-4h3v4M11 13h3" stroke="#333a66" fill="none"/></svg>',
  baidu: '<svg class="size-4 shrink-0" viewBox="0 0 16 16"><rect width="16" height="16" fill="#fff"/><g fill="#2932e1"><ellipse cx="2.700" cy="6.500" rx="1.600" ry="2"/><ellipse cx="6" cy="3.200" rx="1.600" ry="2.200"/><ellipse cx="10.200" cy="3.200" rx="1.600" ry="2.200"/><ellipse cx="13.400" cy="6.800" rx="1.600" ry="2"/><path d="M8 6.500c2 0 2.500 2 4.500 4s1 5-1.500 4.500-3.500-.3-6 0-3.500-2.500-1.500-4.500S6 6.500 8 6.500z"/></g><path d="M7 10v3.500H5.500v-2H7M9 11v2.500h2V11" stroke="#fff" stroke-width=".8" fill="none"/></svg>',
  c: '<svg class="size-4 shrink-0" viewBox="0 0 16 16"><rect width="16" height="16" fill="#fc5531"/><path d="M11.800 4.800C9.500 2.800 4.700 3.500 4.500 8s4.700 5.300 7.300 3.300" stroke="#fff" stroke-width="2" fill="none"/></svg>',
  knife: '<svg class="size-4 shrink-0" viewBox="0 0 16 16"><rect width="16" height="16" fill="#fff"/><path d="M1 3l5 2M8 8L14 1M5 6L3 1M9 8l6-1M12 14l3 1" stroke="#aaa"/><path d="M4 5.500L12 13" stroke="#a3383a" stroke-width="3.200"/></svg>',
  warn: '<svg class="size-4 shrink-0" viewBox="0 0 16 16"><path d="M8 1l6.500 13.500h-13z" fill="#eee" stroke="#eee" stroke-linejoin="round"/><path d="M8 5v5M8 11.500v1.800" stroke="#23252e" stroke-width="1.800"/></svg>'
};
const tabs = [['','172.16.70'],['','172.16.70'],['pma','172.1'],['','172.16.70'],['','CTF 6 - V'],['','172.16.70'],['','Apache2'],['baidu','netca'],['c','Netca'],['knife','The G'],['warn','Probl'],['','CTF 6 - V'],['','http://17'],['','172.16.70'],['','CTF 6 - V'],['','172.16.70']];
document.getElementById('tabs').innerHTML =
  '<button role="tab" class="flex w-7 items-center py-1"><span class="flex h-6 w-full items-center border-r border-[#6a6c74] pl-1 whitespace-nowrap text-[#6a6c74]">- \\</span></button>' +
  tabs.map(([i, t], n) => '<button role="tab" class="flex w-[76px] items-center py-1"><span class="flex h-6 w-full items-center ' + (n < 15 ? 'border-r border-[#6a6c74]' : '') + ' pr-[10px] pl-[9px]"><span class="flex min-w-0 flex-1 items-center gap-[6px] overflow-hidden mask-r-from-50% mask-r-to-100% whitespace-nowrap">' + (icons[i] || '') + '<span>' + t + '</span></span></span></button>').join('') +
  '<button role="tab" aria-selected="true" class="-mb-px flex w-[76px] items-center border-x border-t-3 border-x-[#0f1014] border-t-[#2777ff] bg-[#42444b] pb-[3px] pl-[9px]"><span class="w-[38px] overflow-hidden mask-r-from-60% mask-r-to-100% text-left whitespace-nowrap">Dark S</span><svg class="ml-[5px] size-[11px]"><use href="#x"/></svg></button>';

const link = t => '<a href="#" class="text-[#33cc99] underline">' + t + '</a>';
const files = [['.','21 Items'],['..','22 Items'],['1.php','0.04 KB'],['10613.c','6.56 KB'],['7675.php','122.6 KB'],['8478.sh','3.29 KB'],['big2.php','6.58 KB'],['drive-removable-media-ieee1394.png','3.14 KB'],['exploit','0 KB'],['libno_ex.so.1.0','2.35 KB'],['media-optical-bd.png','3.44 KB'],['netcat','31.94 KB'],['netcat-0.7.1-1.i386.rpm','121.01 KB'],['palm-pilot.png','2.88 KB'],['program.c','0.23 KB'],['program.o','1.36 KB'],['redhat-applications.png','3.44 KB'],['redhat-home.png','2.94 KB']];
document.getElementById('files').innerHTML = files.map(([f, s], n) => {
  const acts = n < 2 ? ['Change directory', 'Remove directory', 'Rename directory', '', ''] : ['Edit', 'Delete', 'Copy', 'Move', 'Remame'];
  return '<tr class="h-[19px]">' + [f, s, ...acts.map(a => a && link(a))].map(c => '<td class="p-0 pl-[3px] whitespace-nowrap">' + c + '</td>').join('') + '</tr>';
}).join('');
</script>
</body>
</html>
